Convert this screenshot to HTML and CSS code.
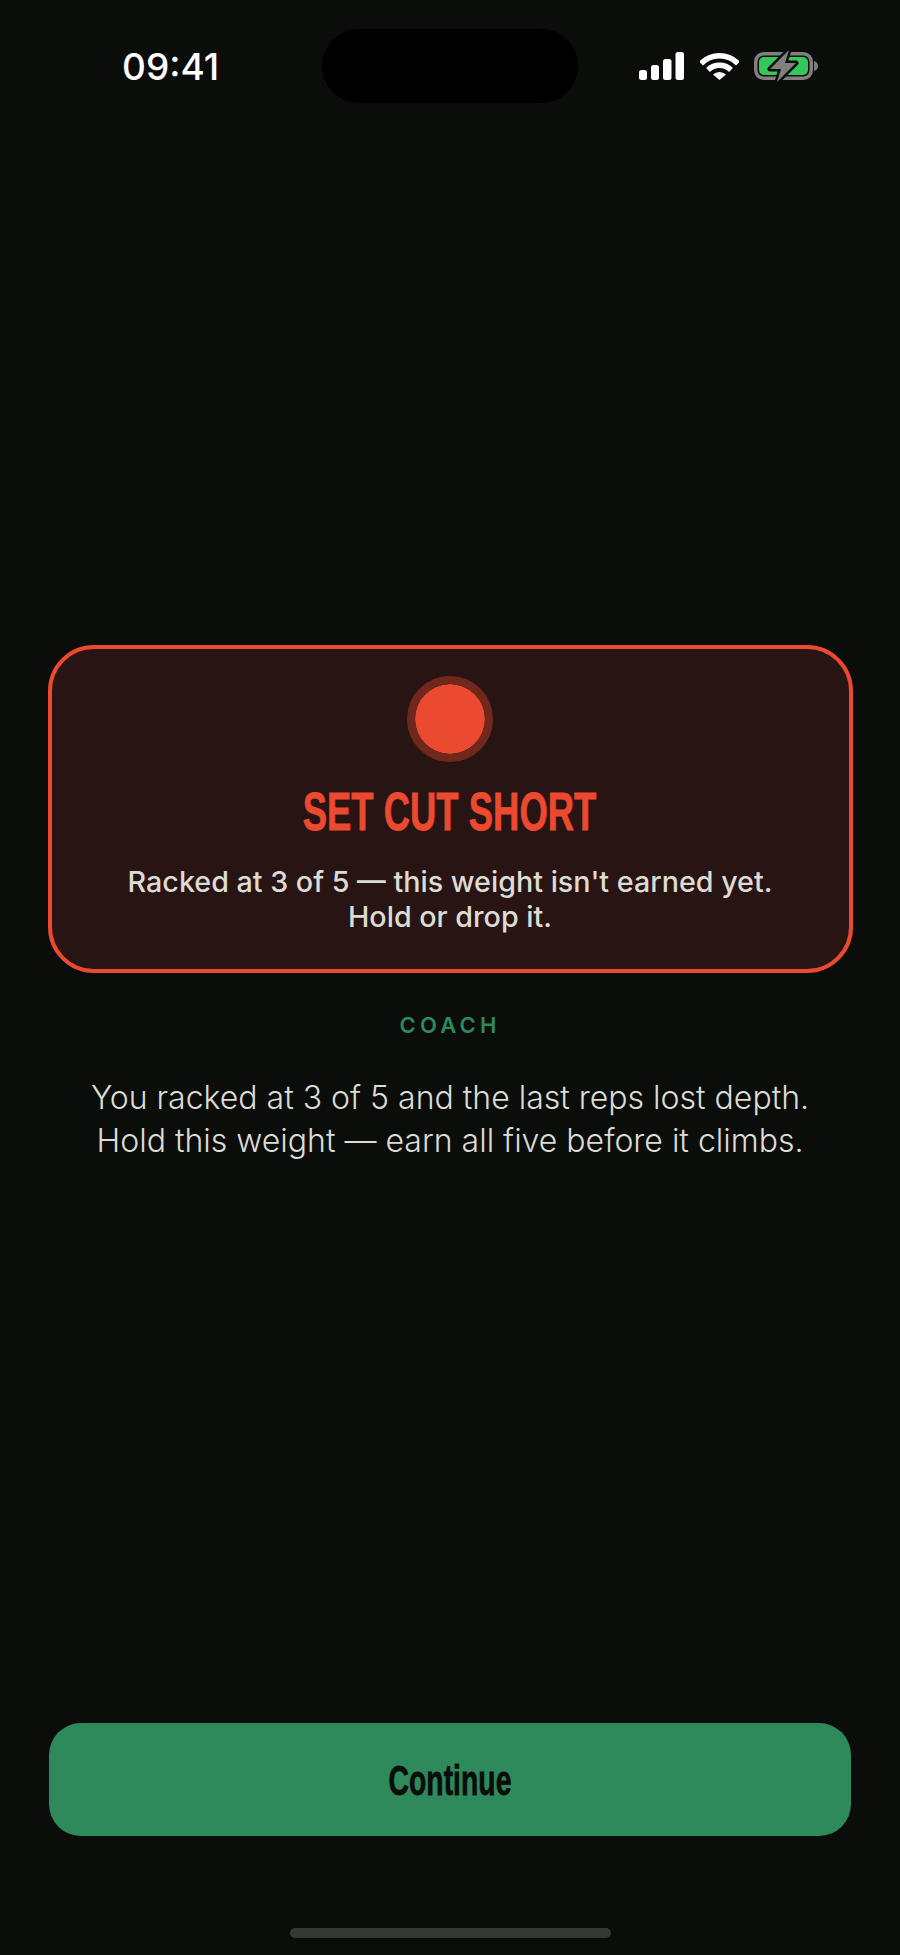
FILE: index.html
```html
<!DOCTYPE html>
<html lang="en">
<head>
    <meta charset="UTF-8">
    <meta name="viewport" content="width=device-width, initial-scale=1.0">
    <title>Set cut short</title>
    <link rel="stylesheet" href="styles.css">
</head>
<body>
    <div class="screen">
        <div class="statusBar">
            <div class="time">09:41</div>
            <div class="island"></div>
            <div class="statusIcons">
                <svg class="signal" width="45" height="28" viewBox="0 0 45 28">
                    <rect x="0" y="18" width="8" height="10" rx="2.5" fill="#fff"/>
                    <rect x="12" y="13" width="8" height="15" rx="2.5" fill="#fff"/>
                    <rect x="24" y="7" width="8.500" height="21" rx="2.5" fill="#fff"/>
                    <rect x="36.500" y="0" width="8.500" height="28" rx="2.5" fill="#fff"/>
                </svg>
                <svg class="wifi" width="39" height="28" viewBox="0 0 39 28">
                    <path d="M1 11.500 A26 26 0 0 1 38 11.500" fill="none" stroke="#fff" stroke-width="5.500"/>
                    <path d="M8 18 A16.500 16.500 0 0 1 31 18" fill="none" stroke="#fff" stroke-width="5.500"/>
                    <path d="M13 22.500 A9.500 9.500 0 0 1 26 22.500 L19.500 28 Z" fill="#fff"/>
                </svg>
                <svg class="battery" width="64" height="32" viewBox="0 0 64 32">
                    <rect x="1.750" y="3.750" width="55.500" height="24.500" rx="8" fill="none" stroke="#808080" stroke-width="3.500"/>
                    <path d="M60 11 C62.500 11.500 64 13.500 64 16 C64 18.500 62.500 20.500 60 21 Z" fill="#808080"/>
                    <rect x="5" y="7" width="49" height="18" rx="5" fill="#34c759"/>
                    <path class="bolt" d="M35 0 L16 19 H27 L23 32 L42 13 H31 Z"/>
                </svg>
            </div>
        </div>

        <div class="content">
            <div class="alertCard">
                <div class="alertDot"></div>
                <h1 class="alertTitle"><span class="narrow">SET CUT SHORT</span></h1>
                <p class="alertText">Racked at 3 of 5 — this weight isn't earned yet.<br>Hold or drop it.</p>
            </div>
            <div class="coachLabel">COACH</div>
            <p class="coachText">You racked at 3 of 5 and the last reps lost depth.<br>Hold this weight — earn all five before it climbs.</p>
        </div>

        <button class="continueBtn"><span class="narrow">Continue</span></button>
        <div class="homeBar"></div>
    </div>
</body>
</html>
```

FILE: styles.css
```css
* {
    box-sizing: border-box;
}

body, h1, p {
    margin: 0;
    padding: 0;
}

body {
    font-family: Inter, "Liberation Sans", sans-serif;
    background-color: #0b0d0b;
    color: #ffffff;
    overflow: hidden;
}

.screen {
    display: flex;
    flex-direction: column;
    align-items: center;
    width: 900px;
    height: 1955px;
    background-color: #0b0d0b;
}

.statusBar {
    display: grid;
    grid-template-columns: 1fr 256px 1fr;
    align-items: center;
    width: 100%;
    height: 74px;
    margin-top: 29px;
}

.time {
    padding-left: 122px;
    font-size: 37px;
    font-weight: 500;
    line-height: 1;
}

.island {
    height: 74px;
    border-radius: 37px;
    background-color: #000000;
}

.statusIcons {
    display: flex;
    align-items: center;
    padding-left: 61px;
}

.wifi {
    margin-left: 16px;
}

.battery {
    margin-left: 15px;
}

.bolt {
    fill: #808080;
    stroke: #0b0d0b;
    stroke-width: 5px;
    stroke-linejoin: round;
    paint-order: stroke;
}

/* no condensed face installed, so squeeze the bold sans */
.narrow {
    display: inline-block;
    font-family: "Liberation Sans", sans-serif;
    font-weight: 700;
    transform: scaleX(0.675);
    -webkit-text-stroke: 0.8px currentColor;
}

.content {
    display: flex;
    flex-direction: column;
    align-items: center;
    width: 100%;
    flex: 1;
    padding-top: 542px;
}

.alertCard {
    display: flex;
    flex-direction: column;
    align-items: center;
    width: 805px;
    height: 328px;
    padding-top: 27px;
    border: 4px solid #ec4931;
    border-radius: 46px;
    background-color: #281412;
}

.alertDot {
    width: 86px;
    height: 86px;
    border: 8px solid #70281c;
    border-radius: 50%;
    background-color: #ec4931;
    background-clip: padding-box;
}

.alertTitle {
    margin-top: 18px;
    font-size: 54px;
    line-height: 62px;
    color: #ec4931;
}

.alertText {
    margin-top: 22px;
    font-size: 28.7px;
    font-weight: 500;
    line-height: 35px;
    text-align: center;
    color: #dcdcd4;
}

.coachLabel {
    margin-top: 39px;
    font-size: 22px;
    font-weight: 600;
    line-height: 26px;
    letter-spacing: 4.2px;
    color: #2f8a5b;
}

.coachText {
    margin-top: 38px;
    font-size: 32px;
    font-weight: 300;
    line-height: 43px;
    text-align: center;
    color: #dcdcd4;
}

.continueBtn {
    width: 802px;
    height: 113px;
    padding-top: 4px;
    border: none;
    border-radius: 32px;
    background-color: #2f8a5b;
    font-size: 42px;
    color: #0b0d0b;
}

.homeBar {
    width: 321px;
    height: 10px;
    margin-top: 92px;
    margin-bottom: 17px;
    border-radius: 5px;
    background-color: #333835;
}
```
